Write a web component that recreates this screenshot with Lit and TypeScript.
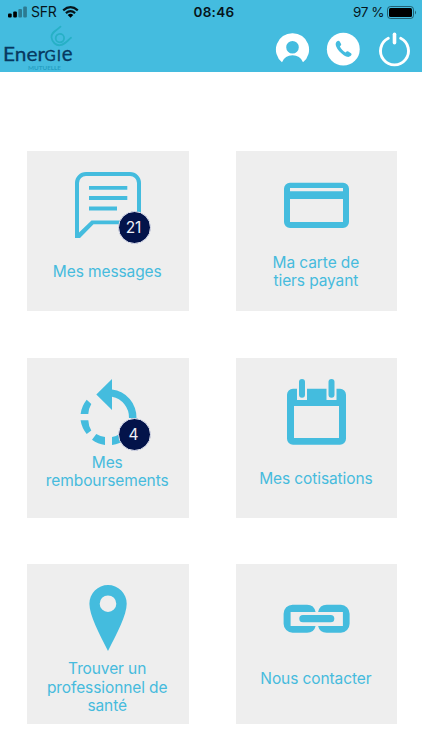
import { LitElement, html, css, svg, nothing } from "lit";
import { customElement, property } from "lit/decorators.js";

const icons: Record<string, unknown> = {
  message: svg`
    <path fill-rule="evenodd" d="M0 66V11A11 11 0 0 1 11 0H55A11 11 0 0 1 66 11V52.3H18.5L5 66ZM4 60.5L16.5 48.5H62V11A7 7 0 0 0 55 4H11A7 7 0 0 0 4 11Z"/>
    <path d="M14 14h38.3v3.8H14zM14 24h38.3v4H14zM14 34.6h28v3.8H14z"/>`,
  card: svg`<path fill-rule="evenodd" d="M6 10.700h53a6 6 0 0 1 6 6V50a6 6 0 0 1-6 6H6a6 6 0 0 1-6-6V16.700a6 6 0 0 1 6-6ZM6 16v3.300h53V16ZM6 27v23h53V27Z"/>`,
  refund: svg`
    <path d="M21.300 15.500L37 0V10.500A28 28 0 0 1 61.500 39H54A21 21 0 0 0 37 17.800V31Z"/>
    <path d="M5.600 35H13.300A21 21 0 0 1 16.300 25L11.700 20.700A28 28 0 0 0 5.600 35Z"/>
    <path d="M5.600 41.300H13.300A21 21 0 0 0 16.300 51.500L11.700 55A28 28 0 0 1 5.600 41.300Z"/>
    <path d="M17 60.700L21.300 55A21 21 0 0 0 30 58V66A28 28 0 0 1 17 60.700Z"/>
    <path d="M37 58A21 21 0 0 0 46 54L51 60A28 28 0 0 1 37 66Z"/>`,
  calendar: svg`
    <path fill-rule="evenodd" d="M9 9.700H13V21H23V9.700H42.500V21H52.500V9.700H56A6 6 0 0 1 62 15.700V59.700A6 6 0 0 1 56 65.700H9A6 6 0 0 1 3 59.700V15.700A6 6 0 0 1 9 9.700ZM10 27V59H55V27Z"/>
    <rect x="15" y="0" width="6" height="18.700" rx="3"/>
    <rect x="44.500" y="0" width="6" height="18.700" rx="3"/>`,
  pin: svg`<path fill-rule="evenodd" d="M33 0A18.700 18.700 0 0 1 51.700 18.700C51.700 30 42 48 33 66C24 48 14.400 30 14.400 18.700A18.700 18.700 0 0 1 33 0ZM33 10.400A8.300 8.300 0 1 0 33 27A8.300 8.300 0 1 0 33 10.400Z"/>`,
  link: svg`
    <g transform="translate(-.4 0)">
      <path d="M9 19.700H23.500Q30.500 19.700 32 27H7V41H32Q30.500 47.700 23.500 47.700H9A9 9 0 0 1 0 38.700V28.700A9 9 0 0 1 9 19.700Z"/>
      <path d="M57.300 19.700H43Q36 19.700 34.500 27H59.300V41H34.500Q36 47.700 43 47.700H57.300A9 9 0 0 0 66 38.700V28.700A9 9 0 0 0 57.300 19.700Z"/>
      <rect x="15.700" y="30" width="35" height="7.300" rx="3.600"/>
    </g>`,
};

interface Tile {
  icon: string;
  lines: string[];
  fit: string;
  count?: number;
}

const tiles: Tile[] = [
  { icon: "message", lines: ["Mes messages"], fit: "roomy", count: 21 },
  { icon: "card", lines: ["Ma carte de", "tiers payant"], fit: "medium" },
  { icon: "refund", lines: ["Mes", "remboursements"], fit: "tight", count: 4 },
  { icon: "calendar", lines: ["Mes cotisations"], fit: "roomy" },
  { icon: "pin", lines: ["Trouver un", "professionnel de", "santé"], fit: "tight" },
  { icon: "link", lines: ["Nous contacter"], fit: "snug" },
];

@customElement("menu-tile")
export class MenuTile extends LitElement {
  @property({ attribute: false }) tile!: Tile;

  static styles = css`
    :host {
      display: flex;
      flex-direction: column;
      align-items: center;
      box-sizing: border-box;
      padding-top: 21px;
      background: #eeeeee;
      color: #46bbdd;
    }
    .figure { position: relative; width: 66px; height: 66px; }
    .icon { display: block; overflow: visible; width: 66px; height: 66px; fill: #44bcde; }
    .badge {
      position: absolute;
      left: 43.500px;
      top: 39.300px;
      box-sizing: border-box;
      width: 33px;
      height: 33px;
      border: 1px solid #dfe2f0;
      border-radius: 50%;
      background: #03134a;
      color: #eef0f8;
      font-size: 15.500px;
      letter-spacing: -0.200px;
      line-height: 31px;
      text-align: center;
      padding-right: 3px;
    }
    .label {
      font-size: 15.500px;
      line-height: 18.600px;
      letter-spacing: -0.100px;
      text-align: center;
      white-space: nowrap;
      padding-right: 1.500px;
    }
    .line { display: block; }
    .roomy { margin-top: 25px; }
    .medium { margin-top: 15.400px; }
    .tight { margin-top: 9.100px; }
    .snug { margin-top: 19px; }
  `;

  render() {
    const { icon, lines, fit, count } = this.tile;
    return html`
      <div class="figure">
        <svg class="icon" viewBox="0 0 66 66">${icons[icon]}</svg>
        ${count ? html`<span class="badge">${count}</span>` : nothing}
      </div>
      <div class="label ${fit}">${lines.map((l) => html`<span class="line">${l}</span>`)}</div>
    `;
  }
}

@customElement("app-root")
export class AppRoot extends LitElement {
  static styles = css`
    :host {
      display: block;
      width: 422px;
      height: 750px;
      overflow: hidden;
      background: #fff;
      font-family: Inter, "Liberation Sans", sans-serif;
    }
    .header { height: 71.700px; background: #44bcdf; color: #06151b; }
    .status {
      display: grid;
      grid-template-columns: 1fr auto 1fr;
      align-items: center;
      height: 24px;
      box-sizing: border-box;
      padding: 0 5px 0 8px;
      font-size: 14px;
      line-height: 24px;
    }
    .carrier { display: flex; align-items: center; gap: 4px; letter-spacing: -0.300px; }
    .time { font-weight: 600; font-size: 13.500px; letter-spacing: 0.350px; padding-left: 3px; }
    .power { display: flex; align-items: center; justify-content: flex-end; gap: 3px; white-space: nowrap; font-size: 13.500px; letter-spacing: -0.450px; }
    .signal, .wifi, .battery, .logo, .action { display: block; }
    .wifi { margin-left: 2px; }
    .bar { display: flex; height: 47.700px; padding-right: 10px; }
    .actions { display: flex; margin-left: auto; gap: 16px; padding-top: 8px; }
    .wordmark { font-family: Lato, sans-serif; font-weight: 400; fill: #07395f; stroke: #07395f; stroke-width: 0.300px; }
    .tagline { font-family: Lato, sans-serif; font-weight: 700; fill: #259fc3; }
    .grid {
      display: grid;
      grid-template-columns: 161.300px 161.300px;
      grid-auto-rows: 160px;
      column-gap: 47.400px;
      row-gap: 46.500px;
      padding: 79.500px 0 0 27.300px;
    }
  `;

  render() {
    return html`
      <header class="header">
        <div class="status">
          <div class="carrier">
            <svg class="signal" width="19" height="12" viewBox="0 0 19 12">
              <rect x="0" y="7.500" width="3.700" height="4" rx="1" />
              <rect x="5.200" y="5.500" width="3.700" height="6" rx="1" />
              <rect x="10.300" y="3" width="3.700" height="8.500" rx="1" opacity=".35" />
              <rect x="15.200" y="0.500" width="3.700" height="11" rx="1" opacity=".35" />
            </svg>
            <span>SFR</span>
            <svg class="wifi" width="17" height="12" viewBox="0 0 17 12">
              <path d="M1.200 4.300Q8.500-2 15.800 4.300M3.900 7.100Q8.500 3.200 13.100 7.100" fill="none" stroke="#06151b" stroke-width="2.200" />
              <path d="M5.700 8.900Q8.500 6.800 11.300 8.900L8.500 11.700Z" />
            </svg>
          </div>
          <div class="time">08:46</div>
          <div class="power">
            <span>97 %</span>
            <svg class="battery" width="30" height="13" viewBox="0 0 30 13">
              <rect x="0.500" y="0.500" width="26" height="12" rx="3" fill="none" stroke="#06151b" stroke-opacity=".55" />
              <rect x="2" y="2" width="23" height="9" rx="1.500" fill="#000" />
              <path d="M28 4.500Q30 6.500 28 8.500Z" opacity=".5" />
            </svg>
          </div>
        </div>
        <div class="bar">
          <svg class="logo" width="80" height="47" viewBox="0 24 80 47">
            <path d="M60.500 26.700C56 31 51 32 51.500 37.500C52 42 56 45.700 60 45.200C65 44.500 67 41 71 37.800M55.700 38.200A4.200 4.200 0 1 0 59.900 33.900A4.200 4.200 0 0 0 55.700 38.200Z" fill="none" stroke="#27b0c6" stroke-width="1.800" stroke-linecap="round" />
            <text class="wordmark" y="61.300" font-size="19.500">
              <tspan x="3" textLength="42" lengthAdjust="spacingAndGlyphs">Ener</tspan><tspan x="44.500" font-size="15.300">G</tspan><tspan x="56.700" font-size="15.300">I</tspan><tspan x="61.700" font-size="20.500">e</tspan>
            </text>
            <text class="tagline" x="28" y="69.600" font-size="5" textLength="33" lengthAdjust="spacingAndGlyphs">MUTUELLE</text>
          </svg>
          <div class="actions">
            <svg class="action" width="35" height="35" viewBox="0 0 35 35">
              <path fill="#fff" fill-rule="evenodd" d="M17.500 1.200A16.300 16.300 0 0 0 7 30.200Q10 23.300 17.500 23.300T28 30.200A16.300 16.300 0 0 0 17.500 1.200ZM17.500 9A6.300 6.300 0 1 1 17.500 21.600A6.300 6.300 0 1 1 17.500 9Z" />
            </svg>
            <svg class="action" width="35" height="35" viewBox="0 0 35 35">
              <circle cx="17.300" cy="17.200" r="16.400" fill="#fff" />
              <path fill="#44bcdf" d="M10.800 9.400C12 8.300 13 8.500 13.700 9.500L15.100 12C15.500 13 14.700 13.600 13.900 14.500C15.100 17 16.800 18.900 19.500 20.500C20.500 19.600 21.300 19 22.300 19.500L25 21.200C26 22 25.700 23 24.500 24.100C22.800 25.500 20.500 24.900 17.800 23.200C14.500 21 11.500 17.700 10.200 14.500C9.400 12.300 9.500 10.500 10.800 9.400Z" />
            </svg>
            <svg class="action" width="35" height="35" viewBox="0 0 35 35">
              <path d="M11.300 6.300A14 14 0 1 0 23.700 6.300" fill="none" stroke="#fff" stroke-width="2.900" stroke-linecap="round" />
              <path d="M17.500 2.300V10.700" stroke="#fff" stroke-width="3.600" stroke-linecap="round" />
            </svg>
          </div>
        </div>
      </header>
      <main class="grid">${tiles.map((t) => html`<menu-tile .tile=${t}></menu-tile>`)}</main>
    `;
  }
}
